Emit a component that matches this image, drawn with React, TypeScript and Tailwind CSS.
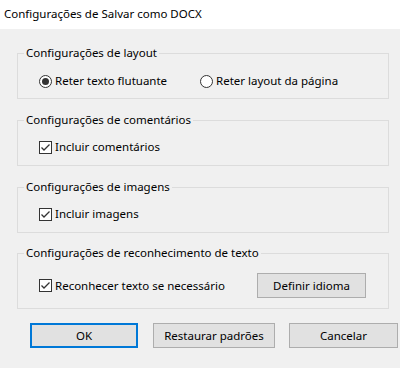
import React from 'react';

const font = { fontFamily: '"Noto Sans", "Liberation Sans", sans-serif' };

const Radio = ({ checked, label }: { checked?: boolean; label: string }) => (
  <label className="flex items-center h-4 gap-[3px]">
    <span className="w-[13px] h-[13px] rounded-full border border-[#333] bg-white flex items-center justify-center shrink-0">
      {checked && <span className="w-[7px] h-[7px] rounded-full bg-[#333]" />}
    </span>
    <span>{label}</span>
  </label>
);

const Checkbox = ({ label }: { label: string }) => (
  <label className="flex items-center h-4 gap-[3px]">
    <span className="w-[13px] h-[13px] border border-[#333] bg-white flex items-center justify-center shrink-0">
      <svg width="11" height="11" viewBox="0 0 11 11">
        <path d="M1.5 5.5 L4 8 L9.5 2.5" fill="none" stroke="#333" strokeWidth="1.3" />
      </svg>
    </span>
    <span>{label}</span>
  </label>
);

const Group = ({
  title,
  className,
  children,
}: {
  title: string;
  className: string;
  children: React.ReactNode;
}) => (
  <fieldset className={`border border-[#dcdcdc] ${className}`}>
    <legend className="ml-[6px] px-[2px] h-4 leading-4">{title}</legend>
    <div className="pl-[21px]">{children}</div>
  </fieldset>
);

const Button = ({ label, primary, className }: { label: string; primary?: boolean; className: string }) => (
  <button
    className={`h-[25px] bg-[#e1e1e1] flex items-center justify-center ${
      primary ? 'border-2 border-[#0078d7]' : 'border border-[#adadad]'
    } ${className}`}
  >
    {label}
  </button>
);

export default function App() {
  return (
    <div className="w-[400px] h-[368px] bg-[#f0f0f0] text-[11.5px] leading-4 text-black" style={font}>
      <div className="h-[29px] bg-white flex items-center pl-[4px] pb-[1px]">
        Configurações de Salvar como DOCX
      </div>

      <div className="ml-[17px] w-[372px] pt-[16px]">
        <Group title="Configurações de layout" className="pt-[12px] pb-[9px]">
          <div className="flex">
            <div className="w-[161px]">
              <Radio checked label="Reter texto flutuante" />
            </div>
            <Radio label="Reter layout da página" />
          </div>
        </Group>

        <Group title="Configurações de comentários" className="mt-[13px] pt-[11px] pb-[10px]">
          <Checkbox label="Incluir comentários" />
        </Group>

        <Group title="Configurações de imagens" className="mt-[13px] pt-[11px] pb-[10px]">
          <Checkbox label="Incluir imagens" />
        </Group>

        <Group title="Configurações de reconhecimento de texto" className="mt-[12px] pt-[12px] pb-[10px]">
          <div className="flex items-center h-[25px]">
            <div className="w-[218px]">
              <Checkbox label="Reconhecer texto se necessário" />
            </div>
            <Button label="Definir idioma" className="w-[109px]" />
          </div>
        </Group>
      </div>

      <div className="flex mt-[14px] pl-[30px]">
        <Button label="OK" primary className="w-[108px]" />
        <Button label="Restaurar padrões" className="w-[122px] ml-[15px]" />
        <Button label="Cancelar" className="w-[109px] ml-[14px]" />
      </div>
    </div>
  );
}
